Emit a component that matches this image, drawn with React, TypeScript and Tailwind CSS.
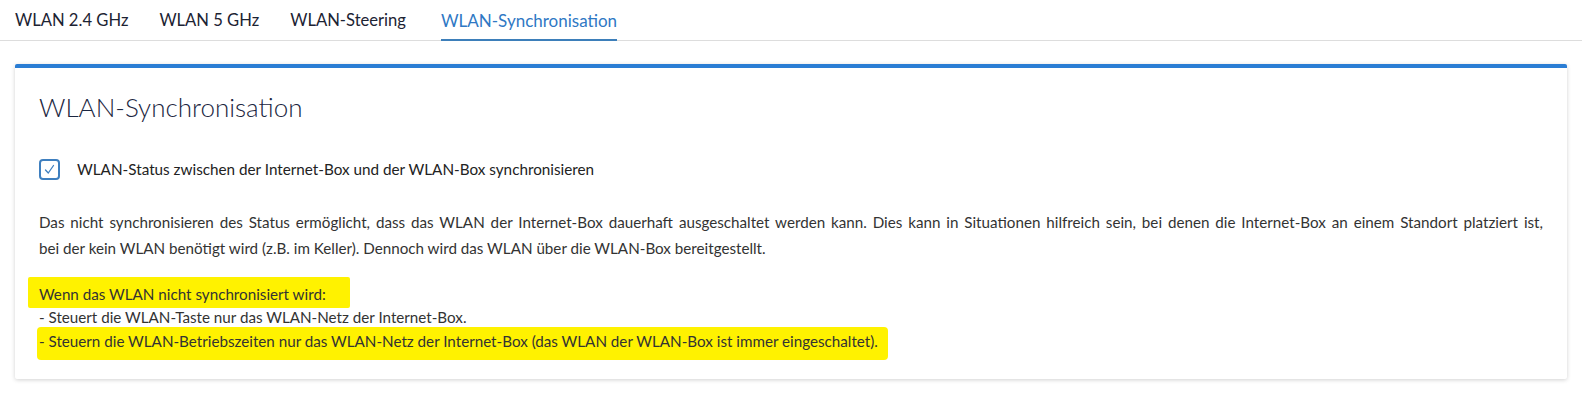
import React from "react";

const tabs = ["WLAN 2.4 GHz", "WLAN 5 GHz", "WLAN-Steering", "WLAN-Synchronisation"];

export default function App() {
  return (
    <div
      className="w-[1582px] h-[397px] bg-white text-[#333333]"
      style={{ fontFamily: "Lato, 'Open Sans', sans-serif" }}
    >
      <div className="flex h-[41px] items-stretch gap-[31px] border-b border-[#dddddd] pl-[15px]">
        {tabs.map((t, i) => {
          const active = i === tabs.length - 1;
          return (
            <div
              key={t}
              className={
                active
                  ? "-mb-px ml-[4px] flex items-center border-b-2 border-[#3d7fba] pt-[3px] text-[17px] text-[#2f78c4]"
                  : "flex items-center pt-[3px] pb-[2px] text-[16.6px] text-[#1c2333]"
              }
            >
              {t}
            </div>
          );
        })}
      </div>

      <div className="mx-[15px] mt-[23px] h-[315px] rounded-[2px] border-t-4 border-[#2a7dd4] bg-white shadow-[0_1px_4px_rgba(0,0,0,0.18)]">
        <div className="px-[24px] pt-[21px]">
          <h1 className="text-[26px] font-light leading-[36px] text-[#1b2641]">WLAN-Synchronisation</h1>

          <div className="mt-[33px] flex items-center gap-[17px]">
            <div className="flex h-[21px] w-[21px] items-center justify-center rounded-[4px] border-2 border-[#3e7fbf]">
              <svg width="13" height="13" viewBox="0 0 13 13" fill="none">
                <path d="M2.5 7 L5.3 10 L10.5 2.5" stroke="#3e7fbf" strokeWidth="1.3" strokeLinecap="round" strokeLinejoin="round" />
              </svg>
            </div>
            <span className="text-[15.25px] text-[#222222]">
              WLAN-Status zwischen der Internet-Box und der WLAN-Box synchronisieren
            </span>
          </div>

          <div className="mt-[28px] text-[15.2px] leading-[26px]">
            <div className="text-justify [text-align-last:justify]">
              Das nicht synchronisieren des Status ermöglicht, dass das WLAN der Internet-Box dauerhaft ausgeschaltet werden kann. Dies kann in Situationen hilfreich sein, bei denen die Internet-Box an einem Standort platziert ist,
            </div>
            <div>
              bei der kein WLAN benötigt wird (z.B. im Keller). Dennoch wird das WLAN über die WLAN-Box bereitgestellt.
            </div>
          </div>

          <div className="mt-[22px] text-[15.2px] leading-[23.5px]">
            <div>
              <span className="-ml-[11px] rounded-[2px] bg-[#fff200] pb-[5px] pl-[11px] pr-[24px] pt-[8px]">
                Wenn das WLAN nicht synchronisiert wird:
              </span>
            </div>
            <div>- Steuert die WLAN-Taste nur das WLAN-Netz der Internet-Box.</div>
            <div>
              <span className="-ml-[2px] rounded-[4px] bg-[#fff200] pb-[10px] pl-[2px] pr-[10px] pt-[5px]">
                - Steuern die WLAN-Betriebszeiten nur das WLAN-Netz der Internet-Box (das WLAN der WLAN-Box ist immer eingeschaltet).
              </span>
            </div>
          </div>
        </div>
      </div>
    </div>
  );
}
